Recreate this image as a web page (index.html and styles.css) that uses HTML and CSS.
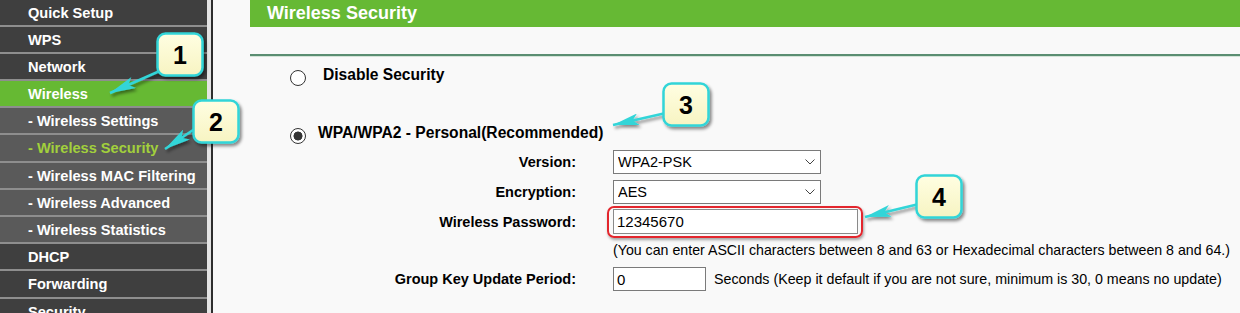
FILE: index.html
```html
<!DOCTYPE html>
<html lang="en">
<head>
    <meta charset="UTF-8">
    <title>Wireless Security</title>
    <link rel="stylesheet" href="styles.css">
</head>
<body>
    <div class="page">
        <nav class="menu">
            <a class="item">Quick Setup</a>
            <a class="item">WPS</a>
            <a class="item">Network</a>
            <a class="item on">Wireless</a>
            <a class="item sub">- Wireless Settings</a>
            <a class="item sub current">- Wireless Security</a>
            <a class="item sub">- Wireless MAC Filtering</a>
            <a class="item sub">- Wireless Advanced</a>
            <a class="item sub">- Wireless Statistics</a>
            <a class="item">DHCP</a>
            <a class="item">Forwarding</a>
            <a class="item">Security</a>
        </nav>
        <div class="menu-edge"></div>

        <main class="content">
            <h1 class="title">Wireless Security</h1>
            <hr class="rule">

            <label class="choice choice-off"><input type="radio" name="sec">Disable Security</label>
            <label class="choice choice-wpa"><input type="radio" name="sec" checked>WPA/WPA2 - Personal(Recommended)</label>

            <div class="field f-version">
                <span class="label">Version:</span>
                <div class="select-box">
                    <select><option>WPA2-PSK</option></select>
                    <svg class="chev" viewBox="0 0 10 6"><polyline points="0.5,0.5 5,5 9.5,0.5" fill="none" stroke="#444" stroke-width="1"/></svg>
                </div>
            </div>
            <div class="field f-enc">
                <span class="label">Encryption:</span>
                <div class="select-box">
                    <select><option>AES</option></select>
                    <svg class="chev" viewBox="0 0 10 6"><polyline points="0.5,0.5 5,5 9.5,0.5" fill="none" stroke="#444" stroke-width="1"/></svg>
                </div>
            </div>
            <div class="field f-pass">
                <span class="label">Wireless Password:</span>
                <div class="pw-mark"><input class="pw" type="text" value="12345670"></div>
            </div>
            <div class="hint">(You can enter ASCII characters between 8 and 63 or Hexadecimal characters between 8 and 64.)</div>
            <div class="field f-group">
                <span class="label">Group Key Update Period:</span>
                <input class="short" type="text" value="0">
                <span class="note">Seconds (Keep it default if you are not sure, minimum is 30, 0 means no update)</span>
            </div>
        </main>
    </div>

    <!-- step callouts drawn over the page -->
    <svg class="notes" width="1240" height="313" viewBox="0 0 1240 313">
        <defs>
            <filter id="shade" x="-30%" y="-30%" width="160%" height="160%">
                <feDropShadow dx="2" dy="2.5" stdDeviation="1.6" flood-color="#000" flood-opacity="0.45"/>
            </filter>
            <linearGradient id="note" x1="0" y1="0" x2="0" y2="1">
                <stop offset="0" stop-color="#fffee2"/>
                <stop offset="1" stop-color="#f7f4c2"/>
            </linearGradient>
            <marker id="head" markerUnits="userSpaceOnUse" markerWidth="28" markerHeight="12" refX="26" refY="6" orient="auto">
                <path d="M0,0 L26,6 L0,12 L6,6 Z" fill="#33d5d8"/>
            </marker>
        </defs>
        <g class="arrows" filter="url(#shade)" stroke="#33d5d8" stroke-width="2.5" marker-end="url(#head)">
            <line x1="162" y1="70" x2="110" y2="93"/>
            <line x1="196" y1="128" x2="165" y2="149"/>
            <line x1="666" y1="113" x2="613" y2="125"/>
            <line x1="919" y1="204" x2="865" y2="217"/>
        </g>
        <g class="boxes" filter="url(#shade)" fill="url(#note)" stroke="#33d5d8" stroke-width="2.5">
            <rect x="157.5" y="33.5" width="45" height="42" rx="8"/>
            <rect x="193.5" y="100.5" width="45" height="42" rx="8"/>
            <rect x="663.5" y="83.5" width="45" height="42" rx="8"/>
            <rect x="916.5" y="175.5" width="45" height="42" rx="8"/>
        </g>
        <g class="nums">
            <text x="180" y="55">1</text>
            <text x="216" y="122">2</text>
            <text x="686" y="105">3</text>
            <text x="939" y="197">4</text>
        </g>
    </svg>
</body>
</html>
```

FILE: styles.css
```css
body { margin: 0; font-family: "Liberation Sans", Arial, sans-serif; background: #f9f9f9; color: #000; overflow: hidden; }
.page { display: flex; height: 313px; }

.menu { width: 207px; flex: none; margin-top: -0.5px; background: #3f3f3f; }
.item { display: block; height: 24.2px; padding-top: 1px; line-height: 24.2px; padding-left: 28px; border-bottom: 2px solid #8e8e8e; background: #3f3f3f; color: #fff; font-size: 14.6px; font-weight: bold; white-space: nowrap; }
.item.sub { background: #5a5a5a; }
.item.on { background: #66b933; }
.item.current { color: #a2d03c; }
.menu-edge { width: 4px; flex: none; background: #e4e4e4; border-right: 2px solid #2e2e2e; }

.content { flex: 1; padding-left: 37px; }
.title { margin: 0; height: 27px; line-height: 27px; padding-left: 17px; background: #66b934; color: #fff; font-size: 18px; }
.rule { margin: 27px 0 0; height: 0; border: 0; border-top: 2px solid #5b8e72; border-bottom: 1px solid #d3e4d8; }

.choice { display: flex; align-items: center; height: 20px; margin-left: 40px; font-size: 15.6px; font-weight: bold; }
.choice-off { margin-top: 8px; }
.choice-wpa { margin-top: 38px; }
.choice input { appearance: none; width: 16px; height: 16px; margin: 6px 17px 0 0; border: 1px solid #333; border-radius: 50%; background: #fff; flex: none; }
.choice-wpa input { margin-right: 12px; }
.choice input:checked { background: radial-gradient(circle, #333 0 4.2px, #fff 4.8px); }

.field { display: flex; align-items: center; }
.label { width: 326px; flex: none; margin-right: 37px; text-align: right; font-size: 14.5px; font-weight: bold; }
.f-version { margin-top: 7px; }
.f-enc { margin-top: 6px; }
.f-pass { margin-top: 2px; }
.f-group { margin-top: 8px; }

.select-box { position: relative; width: 208px; height: 24px; }
.select-box select { appearance: none; width: 100%; height: 100%; padding: 0 0 0 4px; border: 1px solid #7a7a7a; border-radius: 0; background: #fff; color: #000; font: 14.5px "Liberation Sans", Arial, sans-serif; }
.chev { position: absolute; right: 6px; top: 9px; width: 10px; height: 6px; pointer-events: none; }

.pw-mark { display: flex; margin-left: -6px; padding: 1px 3px 2px 4px; border: 2px solid #e3262d; border-radius: 7px; box-shadow: 1px 2px 3px rgba(0, 0, 0, .35); }
.pw { width: 245px; height: 25px; box-sizing: border-box; padding: 0 3px; border: 1px solid #8a8a8a; background: #fff; font: 15px "Liberation Sans", Arial, sans-serif; }

.hint { margin-top: 4px; padding-left: 363px; line-height: 17px; font-size: 14.2px; white-space: nowrap; }
.short { width: 93px; height: 24px; box-sizing: border-box; padding: 0 3px; border: 1px solid #7a7a7a; background: #fff; font: 15px "Liberation Sans", Arial, sans-serif; }
.note { margin-left: 8px; font-size: 14.25px; white-space: nowrap; }

.notes { position: absolute; left: 0; top: 0; pointer-events: none; }
.nums text { font: bold 25px "Liberation Sans", Arial, sans-serif; text-anchor: middle; dominant-baseline: central; fill: #000; }
```
